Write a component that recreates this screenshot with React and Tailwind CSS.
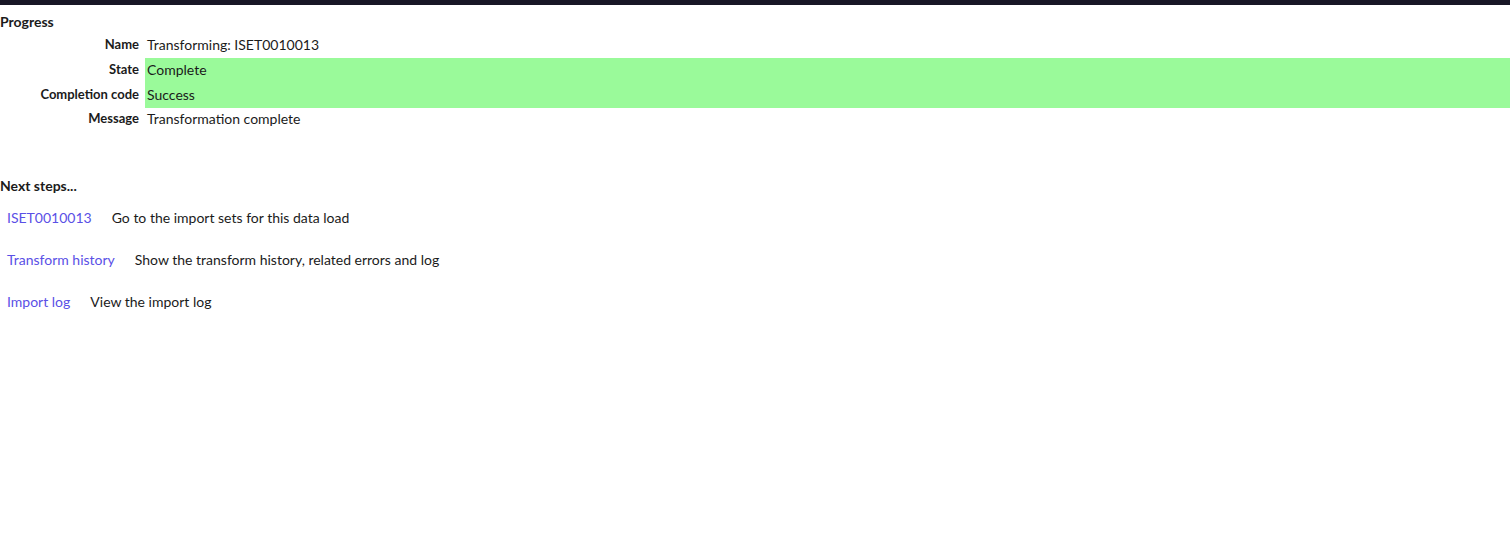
import React from 'react';

const rows = [
  { label: 'Name', value: 'Transforming: ISET0010013' },
  { label: 'State', value: 'Complete', ok: true },
  { label: 'Completion code', value: 'Success', ok: true },
  { label: 'Message', value: 'Transformation complete', last: true },
];

const steps = [
  { link: 'ISET0010013', text: 'Go to the import sets for this data load' },
  { link: 'Transform history', text: 'Show the transform history, related errors and log' },
  { link: 'Import log', text: 'View the import log' },
];

const App = () => {
  return (
    <div className="min-h-[534px] bg-white text-[14px] text-[#1b1b1b]" style={{ fontFamily: 'Lato, "Open Sans", sans-serif' }}>
      <div className="h-[5px] bg-[#181626]"></div>

      <div className="pt-[8px]">
        <div className="font-bold h-[18px] leading-[18px]">Progress</div>
        <table className="w-full border-collapse mt-[2px]">
          <tbody>
            {rows.map((row) => (
              <tr key={row.label} className={row.last ? 'h-[23px]' : 'h-[25px]'}>
                <td className="w-[145px] text-right text-[13px] font-bold pr-[6px] pb-[2px] whitespace-nowrap">{row.label}</td>
                <td className={`pl-[2px] pb-[2px] ${row.ok ? 'bg-[#9afa9a]' : ''}`}>{row.value}</td>
              </tr>
            ))}
          </tbody>
        </table>
      </div>

      <div className="mt-[46px]">
        <div className="font-bold h-[18px] leading-[18px]">Next steps...</div>
        <div className="flex flex-col gap-[24px] mt-[14px] pl-[7px]">
          {steps.map((s) => (
            <div key={s.link} className="flex gap-[20px] h-[18px] leading-[18px]">
              <a href="#" className="text-[#5a50e6]">{s.link}</a>
              <span>{s.text}</span>
            </div>
          ))}
        </div>
      </div>
    </div>
  );
};

export default App;
